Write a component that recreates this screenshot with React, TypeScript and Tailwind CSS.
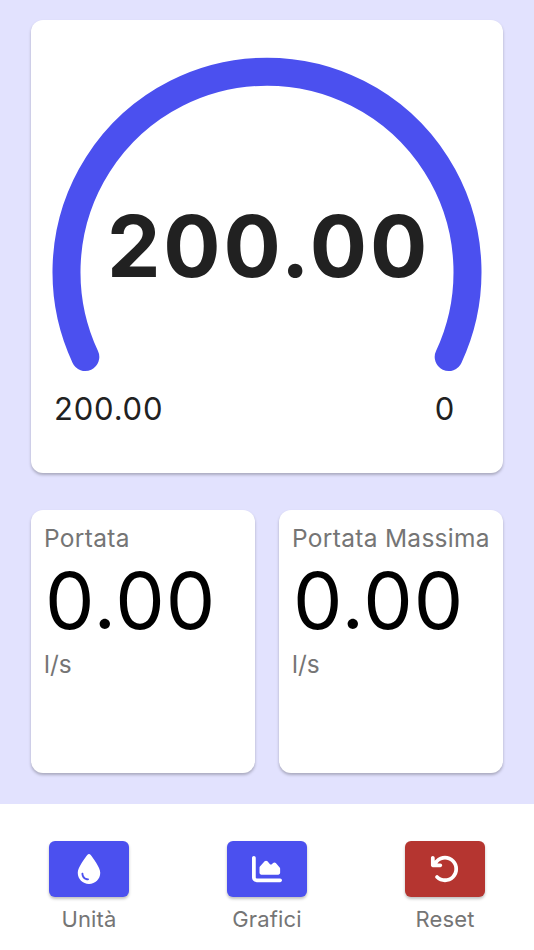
import React from 'react';
import { FaDroplet, FaChartArea, FaArrowRotateLeft } from 'react-icons/fa6';

const READINGS = [
  { label: 'Portata', value: '0.00', unit: 'l/s' },
  { label: 'Portata Massima', value: '0.00', unit: 'l/s' },
];

const ACTIONS = [
  { label: 'Unità', icon: FaDroplet, color: 'bg-[#4b50ef]' },
  { label: 'Grafici', icon: FaChartArea, color: 'bg-[#4b50ef]' },
  { label: 'Reset', icon: FaArrowRotateLeft, color: 'bg-[#b53530]' },
];

export default function App() {
  return (
    <div className="w-[534px] h-[950px] flex flex-col overflow-hidden bg-[#e2e2fe] font-[Inter,sans-serif]">
      <main className="h-[804px] px-[31px] pt-[20px] flex flex-col gap-[36.5px]">
        {/* Gauge */}
        <section className="h-[453px] w-[472px] shrink-0 rounded-[12px] bg-white shadow-[0_2px_3px_rgba(0,0,0,0.25)]">
          <div className="relative h-[355px]">
            <svg width="472" height="355" viewBox="0 0 472 355" fill="none">
              <path d="M54.3 337 A200.5 200.5 0 1 1 417.7 337" stroke="#4b50ef" strokeWidth="28" strokeLinecap="round" />
            </svg>
            <div className="absolute inset-x-0 top-[179px] pl-[3px] text-center text-[85px] leading-[96px] tracking-[2.8px] font-[680] text-[#212121] whitespace-nowrap">200.00</div>
          </div>
          <div className="pl-[23px] pr-[48px] pt-[14px] flex justify-between text-[31px] leading-[40px] tracking-[0.8px] font-[370] text-[#212121]">
            <span>200.00</span>
            <span>0</span>
          </div>
        </section>

        <section className="grid grid-cols-2 gap-[24px]">
          {READINGS.map((r) => (
            <div key={r.label} className="h-[263.5px] rounded-[12px] bg-white px-[13px] pt-[13.5px] shadow-[0_2px_3px_rgba(0,0,0,0.25)]">
              <div className="text-[24.5px] leading-[30px] tracking-[0.3px] font-[370] text-[#757575] whitespace-nowrap">{r.label}</div>
              <div className="pl-[1px] text-[78.5px] leading-[96px] tracking-[1px] text-black whitespace-nowrap">{r.value}</div>
              <div className="text-[24.5px] leading-[30px] font-[370] text-[#757575]">{r.unit}</div>
            </div>
          ))}
        </section>
      </main>

      {/* Bottom actions */}
      <nav className="h-[146px] bg-white grid grid-cols-3 pt-[37px]">
        {ACTIONS.map(({ label, icon: Icon, color }) => (
          <div key={label} className="flex flex-col items-center">
            <button className={`w-[80px] h-[56px] rounded-[6px] flex items-center justify-center text-white shadow-[0_2px_3px_rgba(0,0,0,0.25)] ${color}`}>
              <Icon size={30} />
            </button>
            <span className="mt-[8px] text-[22px] leading-[28px] tracking-[0.15px] font-[370] text-[#757575]">{label}</span>
          </div>
        ))}
      </nav>
    </div>
  );
}
